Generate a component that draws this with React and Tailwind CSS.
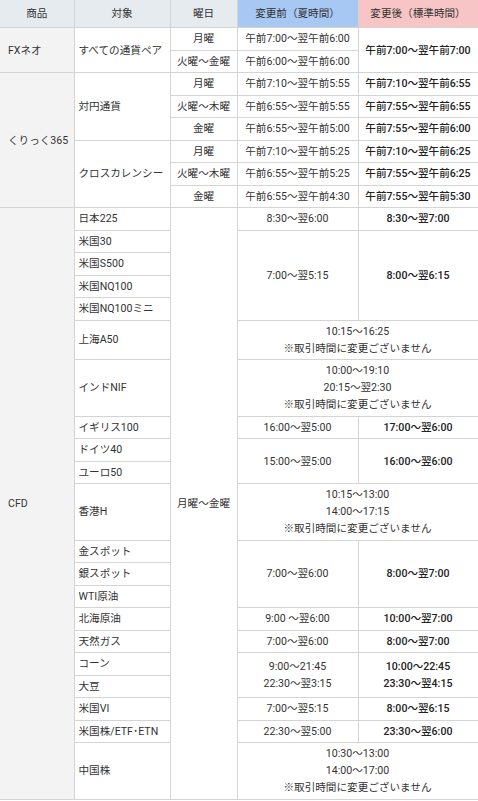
const cell = "border border-[#d4d4d4] px-1 py-[2.26px] leading-[17px] align-middle";

function Th({ children, className = "" }) {
  return (
    <th className={`border border-[#d4d4d4] py-[5px] leading-[17px] font-normal text-center ${className}`}>
      {children}
    </th>
  );
}

function Name({ children, rowSpan }) {
  return (
    <td rowSpan={rowSpan} className={`${cell} border-l-0 pl-2 bg-[#f3f3f3] text-left`}>
      {children}
    </td>
  );
}

function Target({ children, rowSpan }) {
  return (
    <td rowSpan={rowSpan} className={`${cell} text-left`}>
      {children}
    </td>
  );
}

function Center({ children, rowSpan, colSpan, bold }) {
  return (
    <td
      rowSpan={rowSpan}
      colSpan={colSpan}
      className={`${cell} text-center ${bold ? "font-medium text-[#222]" : ""}`}
    >
      {children}
    </td>
  );
}

function Lines({ items }) {
  return items.map((t, i) => <div key={i}>{t}</div>);
}

const NOTE = "※取引時間に変更ございません";

export default function App() {
  return (
    <div className="bg-white w-[478px] pb-[3px]">
      <table
        className="w-[478px] table-fixed border-collapse text-[10.6px] text-[#333]"
        style={{ fontFamily: 'Roboto, "Noto Sans CJK JP", "Noto Sans", sans-serif' }}
      >
        <colgroup>
          <col className="w-[74px]" />
          <col className="w-[96px]" />
          <col className="w-[67px]" />
          <col className="w-[121px]" />
          <col className="w-[120px]" />
        </colgroup>
        <thead>
          <tr>
            <Th className="bg-[#e6ebf0] border-l-0 border-t-0">商品</Th>
            <Th className="bg-[#e6ebf0] border-t-0">対象</Th>
            <Th className="bg-[#e6ebf0] border-t-0">曜日</Th>
            <Th className="bg-[#a8c8f4] border-t-0">変更前（夏時間）</Th>
            <Th className="bg-[#f7c5c5] border-t-0">変更後（標準時間）</Th>
          </tr>
        </thead>
        <tbody>
          <tr>
            <Name rowSpan={2}>FXネオ</Name>
            <Target rowSpan={2}>すべての通貨ペア</Target>
            <Center>月曜</Center>
            <Center>午前7:00〜翌午前6:00</Center>
            <Center rowSpan={2} bold>午前7:00〜翌午前7:00</Center>
          </tr>
          <tr>
            <Center>火曜〜金曜</Center>
            <Center>午前6:00〜翌午前6:00</Center>
          </tr>

          <tr>
            <Name rowSpan={6}>くりっく365</Name>
            <Target rowSpan={3}>対円通貨</Target>
            <Center>月曜</Center>
            <Center>午前7:10〜翌午前5:55</Center>
            <Center bold>午前7:10〜翌午前6:55</Center>
          </tr>
          <tr>
            <Center>火曜〜木曜</Center>
            <Center>午前6:55〜翌午前5:55</Center>
            <Center bold>午前7:55〜翌午前6:55</Center>
          </tr>
          <tr>
            <Center>金曜</Center>
            <Center>午前6:55〜翌午前5:00</Center>
            <Center bold>午前7:55〜翌午前6:00</Center>
          </tr>
          <tr>
            <Target rowSpan={3}>クロスカレンシー</Target>
            <Center>月曜</Center>
            <Center>午前7:10〜翌午前5:25</Center>
            <Center bold>午前7:10〜翌午前6:25</Center>
          </tr>
          <tr>
            <Center>火曜〜木曜</Center>
            <Center>午前6:55〜翌午前5:25</Center>
            <Center bold>午前7:55〜翌午前6:25</Center>
          </tr>
          <tr>
            <Center>金曜</Center>
            <Center>午前6:55〜翌午前4:30</Center>
            <Center bold>午前7:55〜翌午前5:30</Center>
          </tr>

          <tr>
            <Name rowSpan={21}>CFD</Name>
            <Target>日本225</Target>
            <Center rowSpan={21}>月曜〜金曜</Center>
            <Center>8:30〜翌6:00</Center>
            <Center bold>8:30〜翌7:00</Center>
          </tr>
          <tr>
            <Target>米国30</Target>
            <Center rowSpan={4}>7:00〜翌5:15</Center>
            <Center rowSpan={4} bold>8:00〜翌6:15</Center>
          </tr>
          <tr>
            <Target>米国S500</Target>
          </tr>
          <tr>
            <Target>米国NQ100</Target>
          </tr>
          <tr>
            <Target>米国NQ100ミニ</Target>
          </tr>
          <tr>
            <Target>上海A50</Target>
            <Center colSpan={2}>
              <Lines items={["10:15〜16:25", NOTE]} />
            </Center>
          </tr>
          <tr>
            <Target>インドNIF</Target>
            <Center colSpan={2}>
              <Lines items={["10:00〜19:10", "20:15〜翌2:30", NOTE]} />
            </Center>
          </tr>
          <tr>
            <Target>イギリス100</Target>
            <Center>16:00〜翌5:00</Center>
            <Center bold>17:00〜翌6:00</Center>
          </tr>
          <tr>
            <Target>ドイツ40</Target>
            <Center rowSpan={2}>15:00〜翌5:00</Center>
            <Center rowSpan={2} bold>16:00〜翌6:00</Center>
          </tr>
          <tr>
            <Target>ユーロ50</Target>
          </tr>
          <tr>
            <Target>香港H</Target>
            <Center colSpan={2}>
              <Lines items={["10:15〜13:00", "14:00〜17:15", NOTE]} />
            </Center>
          </tr>
          <tr>
            <Target>金スポット</Target>
            <Center rowSpan={3}>7:00〜翌6:00</Center>
            <Center rowSpan={3} bold>8:00〜翌7:00</Center>
          </tr>
          <tr>
            <Target>銀スポット</Target>
          </tr>
          <tr>
            <Target>WTI原油</Target>
          </tr>
          <tr>
            <Target>北海原油</Target>
            <Center>9:00 〜翌6:00</Center>
            <Center bold>10:00〜翌7:00</Center>
          </tr>
          <tr>
            <Target>天然ガス</Target>
            <Center>7:00〜翌6:00</Center>
            <Center bold>8:00〜翌7:00</Center>
          </tr>
          <tr>
            <Target>コーン</Target>
            <Center rowSpan={2}>
              <Lines items={["9:00〜21:45", "22:30〜翌3:15"]} />
            </Center>
            <Center rowSpan={2} bold>
              <Lines items={["10:00〜22:45", "23:30〜翌4:15"]} />
            </Center>
          </tr>
          <tr>
            <Target>大豆</Target>
          </tr>
          <tr>
            <Target>米国VI</Target>
            <Center>7:00〜翌5:15</Center>
            <Center bold>8:00〜翌6:15</Center>
          </tr>
          <tr>
            <Target>米国株/ETF･ETN</Target>
            <Center>22:30〜翌5:00</Center>
            <Center bold>23:30〜翌6:00</Center>
          </tr>
          <tr>
            <Target>中国株</Target>
            <Center colSpan={2}>
              <Lines items={["10:30〜13:00", "14:00〜17:00", NOTE]} />
            </Center>
          </tr>
        </tbody>
      </table>
    </div>
  );
}
